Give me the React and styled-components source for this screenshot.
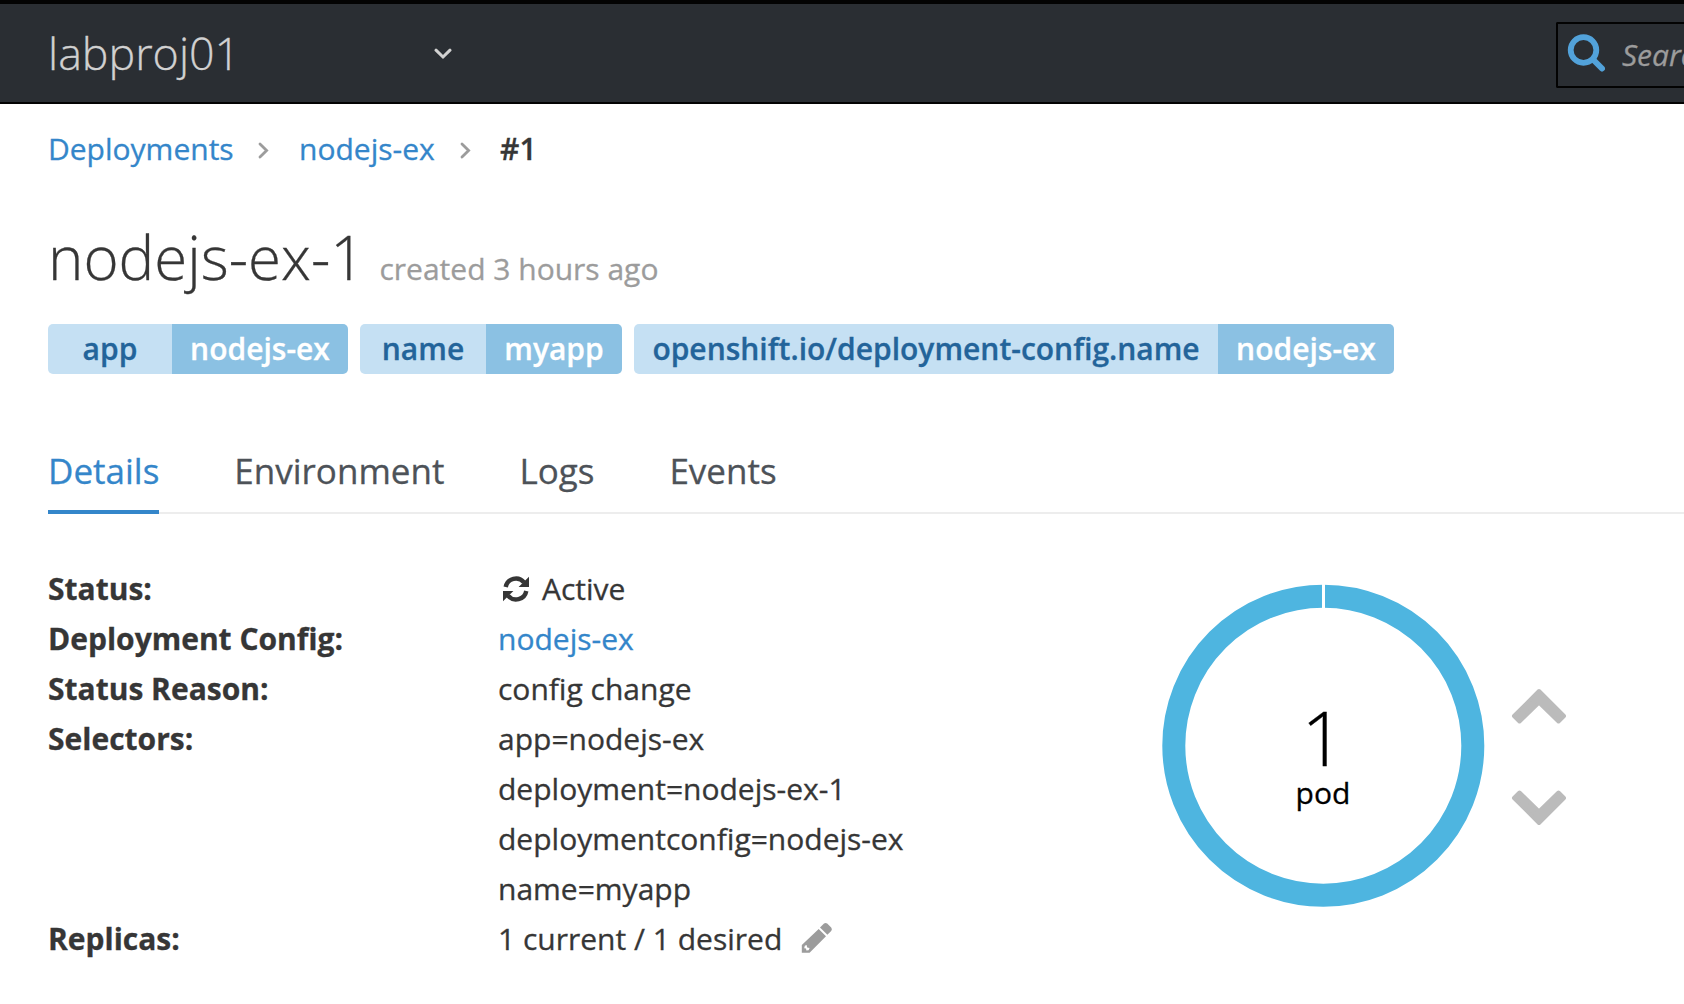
import React from 'react';
import styled, { createGlobalStyle } from 'styled-components';

const GlobalStyle = createGlobalStyle`
  * { box-sizing: border-box; }
  body { margin: 0; background: #fff; color: #363636; overflow: hidden;
    font: 400 30px/50px "Open Sans", "Noto Sans", sans-serif; -webkit-font-smoothing: antialiased;
    -webkit-text-stroke: 0.3px currentColor; }
`;

const Header = styled.header`
  display: flex; justify-content: space-between; align-items: center;
  height: 104px; padding-left: 48px;
  background: #2a2e33; border-top: 4px solid #030303; border-bottom: 2px solid #030303;
  overflow: hidden;
`;
const ProjectPicker = styled.div`
  display: flex; align-items: center; justify-content: space-between; width: 403.5px;
  font-size: 44.8px; font-weight: 300; color: #d1d1d1;
  > svg { margin-top: 2px; }
`;
const SearchBox = styled.div`
  display: flex; align-items: center; flex: none; width: 128px; height: 66px;
  margin-top: 4px; padding-left: 9px; gap: 17px; border: 2px solid #030303; border-right: 0;
  border-radius: 2px 0 0 2px; font-style: italic; color: #9c9c9c; white-space: nowrap; overflow: hidden;
  > svg { margin-bottom: 4px; }
`;
const Icon = styled.svg`display: block; flex: none;`;

const Page = styled.main`padding-left: 48px;`;
const Breadcrumb = styled.nav`
  display: flex; align-items: center; height: 50px; margin-top: 20px;
`;
const Link = styled.a`color: #3486ca;`;
const Crumb = styled.span`display: flex; align-items: center; width: ${p => p.$w}px; color: #9c9c9c;
  justify-content: space-between; padding-right: ${p => p.$end}px;
  > svg { margin-top: 2px; }`;
const Current = styled.strong`font-weight: 600;`;

const Title = styled.h1`
  display: flex; align-items: baseline; gap: 15px; margin: 41px 0 0; height: 109px;
  font-size: 60px; font-weight: 300; line-height: 84px;
`;
const Created = styled.small`font-size: 30px; font-weight: 400; color: #9c9c9c;`;

const Labels = styled.div`display: flex; gap: 12px;`;
const Label = styled.span`display: flex; height: 50px; border-radius: 5px; overflow: hidden; font-weight: 600;`;
const LabelKey = styled.span`width: ${p => p.$w}px; text-align: center; background: #c5e0f3; color: #23649a;`;
const LabelValue = styled.span`width: ${p => p.$w}px; text-align: center; background: #8bc1e3; color: #fff;`;

const Tabs = styled.div`
  display: flex; gap: 75px; height: 84px; margin-top: 56px; border-bottom: 2px solid #ededed;
  font-size: 35px;
`;
const Tab = styled.span`
  height: 84px; padding-top: 16px; color: ${p => (p.$active ? '#3486ca' : '#4d5258')};
  border-bottom: 4px solid ${p => (p.$active ? '#3486ca' : 'transparent')};
`;

const Body = styled.div`display: flex;`;
const Details = styled.dl`
  display: grid; grid-template-columns: 450px 660px; margin: 50px 0 0; width: 1110px;
`;
const Term = styled.dt`font-weight: 700; height: 50px; grid-column: 1;`;
const Value = styled.dd`display: flex; align-items: center; margin: 0; height: 50px; grid-column: 2; gap: ${p => p.$gap || 0}px;`;
const Donut = styled.div`
  display: grid; flex: none; width: 330px; height: 330px; margin-top: 66px;
  > * { grid-area: 1 / 1; }
`;
const PodCount = styled.div`
  display: flex; flex-direction: column; align-items: center; padding-top: 116px; color: #000;
`;
const Count = styled.span`font-size: 76px; font-weight: 300; line-height: 82px;`;
const PodText = styled.span`line-height: 30px;`;
const Scaler = styled.div`display: flex; flex-direction: column; gap: 64px; margin: 173px 0 0 22px;`;

const Chevron = ({ w, h, d, sw }) => (
  <Icon width={w} height={h} viewBox={`0 0 ${w} ${h}`} fill="none" stroke="currentColor" strokeWidth={sw} strokeLinecap="round">
    <path d={d} />
  </Icon>
);
const CrumbChevron = () => <Chevron w={11} h={17} sw={2.8} d="M2 2 L8.6 8.5 L2 15" />;

const LABELS = [
  ['app', 124, 'nodejs-ex', 176],
  ['name', 126, 'myapp', 136],
  ['openshift.io/deployment-config.name', 584, 'nodejs-ex', 176],
];

export default function App() {
  return (
    <>
      <GlobalStyle />
      <Header>
        <ProjectPicker>
          labproj01
          <Chevron w={18} h={12} sw={3} d="M2 2.2 L9 9 L16 2.2" />
        </ProjectPicker>
        <SearchBox>
          <Icon width="38" height="38" viewBox="0 0 38 38" fill="none" stroke="#52a2da">
            <circle cx="16.5" cy="16" r="12.8" strokeWidth="5.8" />
            <path d="M26.5 26 L35 34.5" strokeWidth="6" strokeLinecap="round" />
          </Icon>
          Search
        </SearchBox>
      </Header>
      <Page>
        <Breadcrumb>
          <Crumb $w={251} $end={30}><Link>Deployments</Link><CrumbChevron /></Crumb>
          <Crumb $w={201} $end={29}><Link>nodejs-ex</Link><CrumbChevron /></Crumb>
          <Current>#1</Current>
        </Breadcrumb>
        <Title>nodejs-ex-1<Created>created 3 hours ago</Created></Title>
        <Labels>
          {LABELS.map(([k, kw, v, vw]) => (
            <Label key={k}><LabelKey $w={kw}>{k}</LabelKey><LabelValue $w={vw}>{v}</LabelValue></Label>
          ))}
        </Labels>
        <Tabs>
          <Tab $active>Details</Tab><Tab>Environment</Tab><Tab>Logs</Tab><Tab>Events</Tab>
        </Tabs>
        <Body>
          <Details>
            <Term>Status:</Term>
            <Value $gap={13}>
              <Icon width="31" height="26" viewBox="-5 0 31 26" fill="none" stroke="#363636" strokeWidth="4.4">
                <path d="M2.7 11 A10.4 10.4 0 0 1 21 6.4" />
                <path d="M23.3 15 A10.4 10.4 0 0 1 5 19.6" />
                <path d="M26 0.8 V11 H15.6 Z M0 25.2 V15 H10.4 Z" fill="#363636" stroke="none" />
              </Icon>
              Active
            </Value>
            <Term>Deployment Config:</Term><Value><Link>nodejs-ex</Link></Value>
            <Term>Status Reason:</Term><Value>config change</Value>
            <Term>Selectors:</Term><Value>app=nodejs-ex</Value>
            <Value>deployment=nodejs-ex-1</Value>
            <Value>deploymentconfig=nodejs-ex</Value>
            <Value>name=myapp</Value>
            <Term>Replicas:</Term>
            <Value $gap={19}>
              1 current / 1 desired
              <Icon width="32" height="35" viewBox="0 0 32 35" fill="#9c9c9c">
                <path fillRule="evenodd" d="M17.7 7 L25 14.3 L8.6 30.7 H0.8 V23 Z M3.8 23.8 L3.2 26.2 L5 26.6 L5.4 28.6 L7.6 28.2 L8.6 26 L6.2 25.4 L5.6 23 Z" />
                <path d="M19 5.6 L23 1.6 Q24.6 0.4 26.2 1.6 L30.2 5.6 Q31.6 7.2 30.2 8.9 L26.4 12.8 Z" />
              </Icon>
            </Value>
          </Details>
          <Donut>
            <svg width="330" height="330" viewBox="0 0 330 330">
              <circle cx="165.3" cy="165.7" r="149.5" fill="none" stroke="#4eb5e0" strokeWidth="23" />
              <path d="M165.5 0 V32" stroke="#fff" strokeWidth="3" />
            </svg>
            <PodCount><Count>1</Count><PodText>pod</PodText></PodCount>
          </Donut>
          <Scaler>
            <Icon width="58" height="38" viewBox="0 0 58 38" fill="#bbb" stroke="#bbb" strokeWidth="4" strokeLinejoin="round">
              <path d="M29 4 L54 29 L48.5 34.5 L29 15.5 L9.5 34.5 L4 29 Z" />
            </Icon>
            <Icon width="58" height="38" viewBox="0 0 58 38" fill="#bbb" stroke="#bbb" strokeWidth="4" strokeLinejoin="round">
              <path d="M29 34 L54 9 L48.5 3.5 L29 22.5 L9.5 3.5 L4 9 Z" />
            </Icon>
          </Scaler>
        </Body>
      </Page>
    </>
  );
}
